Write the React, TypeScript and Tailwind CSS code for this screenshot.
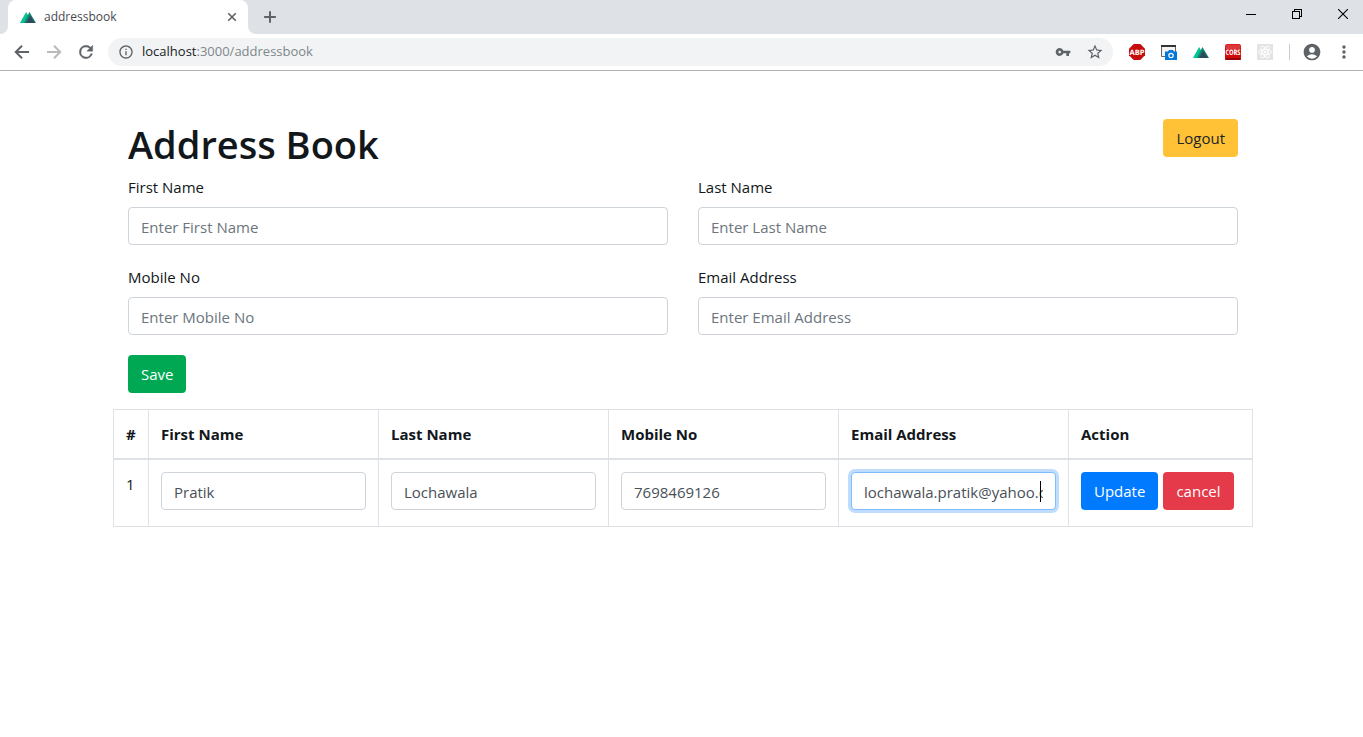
import { useState } from "react";
import type { ButtonHTMLAttributes, InputHTMLAttributes, ReactNode } from "react";
import { MdInfoOutline, MdVpnKey, MdStarBorder, MdAccountCircle, MdMoreVert } from "react-icons/md";

const strokes = {
  back: "M20.5 12 H5 M12 4.5 L4.5 12 L12 19.5",
  forward: "M3.5 12 H19 M12 4.5 L19.5 12 L12 19.5",
  plus: "M12 5 V19 M5 12 H19",
  cross: "M5.5 5.5 L18.5 18.5 M18.5 5.5 L5.5 18.5",
};

function StrokeIcon({ name, size, weight = 2.4 }: { name: keyof typeof strokes; size: number; weight?: number }) {
  return (
    <svg width={size} height={size} viewBox="0 0 24 24" fill="none" stroke="currentColor" strokeWidth={weight} aria-hidden="true">
      <path d={strokes[name]} />
    </svg>
  );
}

function ReloadIcon() {
  return (
    <svg width="20" height="20" viewBox="0 0 24 24" aria-hidden="true">
      <path
        d="M17.65 6.35A7.96 7.96 0 0 0 12 4a8 8 0 1 0 7.73 10h-2.08A6 6 0 1 1 12 6c1.66 0 3.14.69 4.22 1.78L13 11h7V4z"
        fill="currentColor"
        stroke="currentColor"
        strokeWidth="0.5"
      />
    </svg>
  );
}

function NuxtLogo() {
  return (
    <svg width="16" height="16" viewBox="0 0 16 16" aria-hidden="true">
      <path d="M0 14 L6.1 3 L9.8 9.2 L7.5 14 Z" fill="#00c58e" />
      <path d="M4 14 L9.4 3 L16 14 Z" fill="#108775" />
      <path d="M6 14 L10.2 6.6 L15 14 Z" fill="#2f495e" />
    </svg>
  );
}

function AdBlockIcon() {
  return (
    <svg width="16" height="16" viewBox="0 0 16 16" aria-hidden="true">
      <path d="M4.7 0 H11.3 L16 4.7 V11.3 L11.3 16 H4.7 L0 11.3 V4.7 Z" fill="#c70d0b" />
      <text x="8" y="11" textAnchor="middle" fontSize="7.5" fontWeight="700" textRendering="geometricPrecision" fill="#fff" fontFamily="Open Sans, sans-serif">ABP</text>
    </svg>
  );
}

function CaptureIcon() {
  return (
    <svg width="16" height="16" viewBox="0 0 16 16" aria-hidden="true">
      <path d="M0.5 1.5 H14.5 V12.5 H0.5 Z" fill="#f4f4f4" stroke="#666" />
      <path d="M0 1 H15 V3 H0 Z" fill="#333" />
      <path d="M4 7.5 H7 L8 6 H12 L13 7.5 H16 V16 H4 Z" fill="#0078d7" />
      <circle cx="10" cy="11.5" r="2.2" fill="none" stroke="#fff" strokeWidth="1.2" />
    </svg>
  );
}

function CorsIcon() {
  return (
    <svg width="16" height="16" viewBox="0 0 16 16" aria-hidden="true">
      <rect width="16" height="16" rx="2.5" fill="#cf0a0c" />
      <rect x="0.5" y="0.5" width="15" height="5" rx="2" fill="#dc3a3a" />
      <rect y="14" width="16" height="2" rx="1" fill="#9c0306" />
      <text x="8" y="10.8" textAnchor="middle" fontSize="7.6" fontWeight="700" textRendering="geometricPrecision" fill="#fff" fontFamily="Open Sans Condensed, Roboto Condensed, Liberation Sans Narrow, sans-serif">CORS</text>
    </svg>
  );
}

function ReactIcon() {
  return (
    <svg width="16" height="16" viewBox="0 0 16 16" aria-hidden="true">
      <rect width="16" height="16" fill="#e4e4e4" />
      <g fill="none" stroke="#fff" strokeWidth="0.9">
        <ellipse cx="8" cy="8" rx="6.5" ry="2.6" />
        <ellipse cx="8" cy="8" rx="6.5" ry="2.6" transform="rotate(60 8 8)" />
        <ellipse cx="8" cy="8" rx="6.5" ry="2.6" transform="rotate(120 8 8)" />
      </g>
      <circle cx="8" cy="8" r="1.3" fill="#fff" />
    </svg>
  );
}

function IconButton({ label, children }: { label: string; children: ReactNode }) {
  return (
    <button type="button" aria-label={label} className="flex size-8 shrink-0 items-center justify-center">
      {children}
    </button>
  );
}

function BrowserChrome() {
  return (
    <header className="border-b border-[#b3b3b3] text-[#5f6368]">
      <div className="flex h-[34px] bg-[#dee1e6]">
        <div className="flex w-2 bg-white">
          <div className="flex-1 rounded-br-lg bg-[#dee1e6]" />
        </div>
        <div className="flex w-60 items-center gap-2 rounded-t-lg bg-white pr-2 pl-3 text-xs text-[#45494d]">
          <NuxtLogo />
          <span className="flex-1">addressbook</span>
          <button type="button" aria-label="Close tab" className="flex size-4 items-center justify-center text-[#5f6368]">
            <StrokeIcon name="cross" size={14} weight={2.8} />
          </button>
        </div>
        <div className="flex w-2 bg-white">
          <div className="flex-1 rounded-bl-lg bg-[#dee1e6]" />
        </div>
        <button type="button" aria-label="New tab" className="flex w-7 items-center justify-center">
          <StrokeIcon name="plus" size={20} />
        </button>
        <div className="ml-auto flex h-7 text-black">
          <button type="button" aria-label="Minimize" className="flex w-[46px] items-center justify-center">
            <svg width="10" height="10" viewBox="0 0 10 10" shapeRendering="crispEdges"><path d="M0 5.5 H10" stroke="currentColor" /></svg>
          </button>
          <button type="button" aria-label="Restore" className="flex w-[46px] items-center justify-center">
            <svg width="10" height="10" viewBox="0 0 10 10" fill="none" stroke="currentColor" shapeRendering="crispEdges"><path d="M0.5 2.5 H7.5 V9.5 H0.5 Z M2.5 2.5 V0.5 H9.5 V7.5 H7.5" /></svg>
          </button>
          <button type="button" aria-label="Close" className="-mr-[3px] flex w-[46px] items-center justify-center">
            <svg width="10" height="10" viewBox="0 0 10 10" stroke="currentColor" strokeWidth="1.1"><path d="M0 0 L10 10 M10 0 L0 10" /></svg>
          </button>
        </div>
      </div>
      <div className="flex h-9 items-center bg-white pr-[3px] pl-[6px]">
        <IconButton label="Back"><StrokeIcon name="back" size={20} /></IconButton>
        <div className="flex text-[#b9bbbd]"><IconButton label="Forward"><StrokeIcon name="forward" size={20} /></IconButton></div>
        <IconButton label="Reload"><ReloadIcon /></IconButton>
        <div className="ml-[6px] flex h-7 flex-1 items-center gap-2 rounded-full bg-[#f1f3f4] pl-[10px]">
          <MdInfoOutline size={16} />
          <div className="flex-1 text-[13px] text-[#80868b]"><span className="text-[#202124]">localhost</span>:3000/addressbook</div>
          <div className="flex pr-[2px]">
            <IconButton label="Saved passwords"><MdVpnKey size={16} /></IconButton>
            <IconButton label="Bookmark this page"><MdStarBorder size={18} /></IconButton>
          </div>
        </div>
        <div className="ml-2 flex">
          <IconButton label="Ad blocker"><AdBlockIcon /></IconButton>
          <IconButton label="Screen capture"><CaptureIcon /></IconButton>
          <IconButton label="Nuxt devtools"><NuxtLogo /></IconButton>
          <IconButton label="CORS"><CorsIcon /></IconButton>
          <IconButton label="React devtools"><ReactIcon /></IconButton>
        </div>
        <div className="mr-[6px] ml-2 h-4 w-px bg-[#c8cacd]" />
        <IconButton label="Profile"><MdAccountCircle size={20} /></IconButton>
        <IconButton label="Menu"><MdMoreVert size={20} /></IconButton>
      </div>
    </header>
  );
}

function TextInput({ className = "", ...props }: InputHTMLAttributes<HTMLInputElement>) {
  return (
    <input
      className={`block h-[38px] w-full rounded border bg-white px-3 pt-[2px] text-[15px] text-[#495057] outline-none placeholder:text-[#6c757d] ${className || "border-[#ced4da]"}`}
      {...props}
    />
  );
}

function Button({ className, ...props }: ButtonHTMLAttributes<HTMLButtonElement>) {
  return <button type="button" className={`h-[38px] rounded px-[13px] ${className}`} {...props} />;
}

const fields = [
  { id: "first", label: "First Name", value: "Pratik" },
  { id: "last", label: "Last Name", value: "Lochawala" },
  { id: "mobile", label: "Mobile No", value: "7698469126" },
  { id: "email", label: "Email Address", value: "lochawala.pratik@yahoo.com" },
];

export default function App() {
  const [row, setRow] = useState<Record<string, string>>(Object.fromEntries(fields.map((f) => [f.id, f.value])));
  return (
    <div className="min-h-screen bg-white font-['Open_Sans','Noto_Sans',sans-serif]">
      <BrowserChrome />
      <main className="pt-12 pl-[3px] text-[15px] leading-6 text-[#12171b]">
        <div className="mx-auto max-w-[1140px]">
          <div className="px-[15px]">
            <div className="mb-2 flex items-start justify-between">
              <h1 className="pt-[2px] text-[38px] leading-[46px] font-semibold">Address Book</h1>
              <Button className="bg-[#ffc237] text-[#212529]">Logout</Button>
            </div>
            <form>
              <div className="grid grid-cols-2 gap-x-[30px] gap-y-5">
                {fields.map((f) => (
                  <div key={f.id}>
                    <label htmlFor={f.id} className="mb-2 block">{f.label}</label>
                    <TextInput id={f.id} placeholder={`Enter ${f.label}`} />
                  </div>
                ))}
              </div>
              <Button className="mt-5 mb-4 block bg-[#00a854] text-white">Save</Button>
            </form>
          </div>
          <table className="w-full table-fixed border-collapse border border-[#dee2e6] text-left">
            <colgroup>
              <col className="w-[35px]" />
              <col className="w-[230px]" />
              <col className="w-[230px]" />
              <col className="w-[230px]" />
              <col className="w-[230px]" />
              <col />
            </colgroup>
            <thead>
              <tr className="border-b-2 border-[#dee2e6]">
                {["#", ...fields.map((f) => f.label), "Action"].map((h) => (
                  <th key={h} scope="col" className="border-x border-[#dee2e6] p-3 font-bold">{h}</th>
                ))}
              </tr>
            </thead>
            <tbody>
              <tr className="align-top">
                <td className="border-x border-[#dee2e6] p-3">1</td>
                {fields.map((f) => (
                  <td key={f.id} className="border-x border-[#dee2e6] px-3 pt-3 pb-4">
                    <div className="relative">
                      <TextInput
                        aria-label={f.label}
                        value={row[f.id]}
                        onChange={(e) => setRow({ ...row, [f.id]: e.target.value })}
                        className={f.id === "email" ? "border-[#80bdff] shadow-[0_0_0_3px_#bfdeff]" : ""}
                      />
                      {f.id === "email" && <span className="absolute top-[9px] right-[15px] h-[21px] w-px bg-black" />}
                    </div>
                  </td>
                ))}
                <td className="border-x border-[#dee2e6] px-3 pt-3 pb-4">
                  <div className="flex gap-[5px]">
                    <Button className="bg-[#007bff] text-white">Update</Button>
                    <Button className="bg-[#e53a4a] text-white">cancel</Button>
                  </div>
                </td>
              </tr>
            </tbody>
          </table>
        </div>
      </main>
    </div>
  );
}
